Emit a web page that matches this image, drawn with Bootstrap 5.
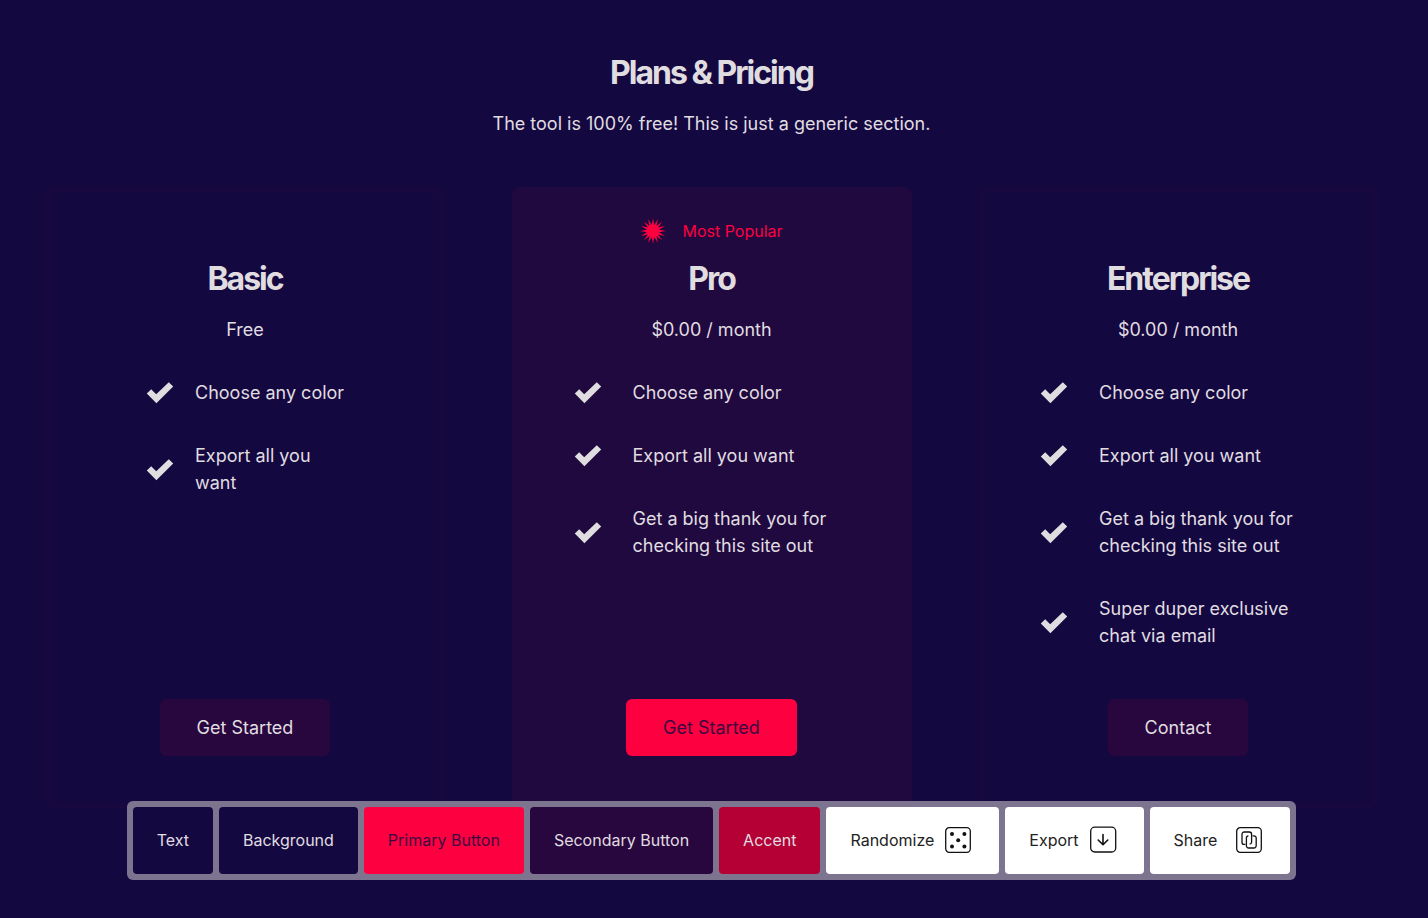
<!DOCTYPE html>
<html lang="en">
<head>
<meta charset="utf-8">
<meta name="viewport" content="width=device-width, initial-scale=1">
<title>Plans &amp; Pricing</title>
<link rel="stylesheet" href="https://cdn.jsdelivr.net/npm/bootstrap@5.3.0/dist/css/bootstrap.min.css">
<style>
  :root {
    --text: #e0dde0;
    --bg: #140840;
    --primary: #fc0040;
    --secondary: #28063e;
    --accent: #b50035;
  }
  body {
    background: var(--bg);
    color: var(--text);
    font-family: Inter, "Liberation Sans", sans-serif;
    font-size: 18px;
    line-height: 27px;
    padding-right: 5px;
  }
  .pricing { padding: 52px 45px 110px; }
  .title {
    font-size: 32px;
    line-height: 42px;
    font-weight: 700;
    letter-spacing: -2px;
    margin: 0;
  }
  .plans {
    display: grid;
    grid-template-columns: repeat(3, minmax(0, 400px));
    justify-content: space-between;
    margin-top: 50px;
  }
  .plan {
    border: 6px solid #170840;
    border-radius: 8px;
    padding: 23px 56px 46px;
  }
  .plan-featured { background: #1f093f; border-color: #1f093f; }
  .ribbon { height: 30px; gap: 16px; margin-bottom: 12px; color: var(--primary); font-size: 16px; }
  .price { margin: 16px 0 0; }
  .features { margin: 36px 0 50px; gap: 36px; }
  .features li { gap: 31px; }
  .features-short { padding: 0 36px 0 39px; }
  .features-short li { gap: 21px; }
  .cta {
    color: var(--text);
    background: var(--secondary);
    border: 0;
    border-radius: 6px;
    font-size: 18px;
    line-height: 27px;
    padding: 15px 37px;
  }
  .cta:hover { color: var(--text); background: #370a50; }
  .cta-primary, .cta-primary:hover { background: var(--primary); color: #3a0840; }
  .toolbar { bottom: 38px; left: 0; right: 5px; pointer-events: none; }
  .toolbar-inner {
    pointer-events: auto;
    background: #7d7590;
    border-radius: 6px;
    padding: 6px;
    gap: 6px;
  }
  .tool {
    height: 67px;
    border: 0;
    border-radius: 4px;
    padding: 0 24px 2px;
    font-size: 16px;
    line-height: 24px;
    color: var(--text);
    background: var(--bg);
  }
  .tool-primary { background: var(--primary); color: #3a0840; }
  .tool-secondary { background: var(--secondary); }
  .tool-accent { background: var(--accent); }
  .tool-plain { background: #fff; color: #222; gap: 10px; padding-right: 27px; }
  .tool-share { gap: 18px; }
</style>
</head>
<body>
<svg class="d-none" aria-hidden="true">
  <symbol id="check" viewBox="0 0 28 27">
    <path d="M.8 14.6 5.2 10.3 10.2 15.3 22.8 3.2 27.2 7.6 10.4 24.2z" fill="currentColor"/>
  </symbol>
</svg>

<main class="pricing">
  <header class="text-center">
    <h1 class="title">Plans &amp; Pricing</h1>
    <p class="mb-0 price">The tool is 100% free! This is just a generic section.</p>
  </header>

  <div class="plans">
    <section class="plan d-flex flex-column align-items-center">
      <div class="ribbon" aria-hidden="true"></div>
      <h2 class="title">Basic</h2>
      <p class="price">Free</p>
      <ul class="features features-short list-unstyled d-flex flex-column align-self-stretch">
        <li class="d-flex align-items-center"><svg class="flex-shrink-0" width="28" height="27"><use href="#check"/></svg><span>Choose any color</span></li>
        <li class="d-flex align-items-center"><svg class="flex-shrink-0" width="28" height="27"><use href="#check"/></svg><span>Export all you want</span></li>
      </ul>
      <button type="button" class="btn cta mt-auto">Get Started</button>
    </section>

    <section class="plan plan-featured d-flex flex-column align-items-center">
      <div class="ribbon d-flex align-items-center">
        <svg width="26" height="26" viewBox="-13 -13 26 26" aria-hidden="true"><path fill="currentColor" d="M0-13 1.2-6 5-12 3.4-5.1 9.2-9.2 5.1-3.4 12-5 6-1.2 13 0 6 1.2 12 5 5.1 3.4 9.2 9.2 3.4 5.1 5 12 1.2 6 0 13-1.2 6-5 12-3.4 5.1-9.2 9.2-5.1 3.4-12 5-6 1.2-13 0-6-1.2-12-5-5.1-3.4-9.2-9.2-3.4-5.1-5-12-1.2-6z"/></svg>
        <span>Most Popular</span>
      </div>
      <h2 class="title">Pro</h2>
      <p class="price">$0.00 / month</p>
      <ul class="features list-unstyled d-flex flex-column align-self-stretch">
        <li class="d-flex align-items-center"><svg class="flex-shrink-0" width="28" height="27"><use href="#check"/></svg><span>Choose any color</span></li>
        <li class="d-flex align-items-center"><svg class="flex-shrink-0" width="28" height="27"><use href="#check"/></svg><span>Export all you want</span></li>
        <li class="d-flex align-items-center"><svg class="flex-shrink-0" width="28" height="27"><use href="#check"/></svg><span>Get a big thank you for checking this site out</span></li>
      </ul>
      <button type="button" class="btn cta cta-primary mt-auto">Get Started</button>
    </section>

    <section class="plan d-flex flex-column align-items-center">
      <div class="ribbon" aria-hidden="true"></div>
      <h2 class="title">Enterprise</h2>
      <p class="price">$0.00 / month</p>
      <ul class="features list-unstyled d-flex flex-column align-self-stretch">
        <li class="d-flex align-items-center"><svg class="flex-shrink-0" width="28" height="27"><use href="#check"/></svg><span>Choose any color</span></li>
        <li class="d-flex align-items-center"><svg class="flex-shrink-0" width="28" height="27"><use href="#check"/></svg><span>Export all you want</span></li>
        <li class="d-flex align-items-center"><svg class="flex-shrink-0" width="28" height="27"><use href="#check"/></svg><span>Get a big thank you for checking this site out</span></li>
        <li class="d-flex align-items-center"><svg class="flex-shrink-0" width="28" height="27"><use href="#check"/></svg><span>Super duper exclusive chat via email</span></li>
      </ul>
      <button type="button" class="btn cta mt-auto">Contact</button>
    </section>
  </div>
</main>

<div class="toolbar position-fixed d-flex justify-content-center" role="toolbar" aria-label="Palette tools">
  <div class="toolbar-inner d-flex">
    <button type="button" class="tool">Text</button>
    <button type="button" class="tool">Background</button>
    <button type="button" class="tool tool-primary">Primary Button</button>
    <button type="button" class="tool tool-secondary">Secondary Button</button>
    <button type="button" class="tool tool-accent">Accent</button>
    <button type="button" class="tool tool-plain d-flex align-items-center">Randomize
      <svg width="28" height="28" viewBox="0 0 28 28" fill="none"><rect x="1.7" y="1.7" width="24.6" height="24.6" rx="3.5" stroke="#111" stroke-width="1.3"/><g fill="#111"><circle cx="8" cy="8" r="2"/><circle cx="20.4" cy="8" r="2"/><circle cx="14.2" cy="14.2" r="2"/><circle cx="8" cy="20.4" r="2"/><circle cx="20.4" cy="20.4" r="2"/></g></svg>
    </button>
    <button type="button" class="tool tool-plain d-flex align-items-center">Export
      <svg width="28" height="28" viewBox="0 0 28 28" fill="none" stroke="#111"><rect x="1.7" y="1.2" width="25" height="24.8" rx="4" stroke-width="1.3"/><path d="M14 8.5V18.5M9.2 14 14 18.7 18.8 14" stroke-width="1.6" stroke-linecap="round" stroke-linejoin="round"/></svg>
    </button>
    <button type="button" class="tool tool-plain tool-share d-flex align-items-center">Share
      <svg width="28" height="28" viewBox="0 0 28 28" fill="none" stroke="#111" stroke-width="1.3"><rect x="1.7" y="1.7" width="24.6" height="24.6" rx="3.5"/><path d="M10.4 18.4H9.2A2.2 2.2 0 0 1 7 16.2V8.2A2.2 2.2 0 0 1 9.2 6H14.4A2.2 2.2 0 0 1 16.6 8.2V16.2A2.2 2.2 0 0 1 14.6 18.2"/><path d="M17.6 9.8H19A2.2 2.2 0 0 1 21.2 12V19.8A2.2 2.2 0 0 1 19 22H13.6A2.2 2.2 0 0 1 11.4 19.8V12A2.2 2.2 0 0 1 13.4 9.8"/></svg>
    </button>
  </div>
</div>
<script src="https://cdn.jsdelivr.net/npm/bootstrap@5.3.0/dist/js/bootstrap.bundle.min.js"></script>
</body>
</html>
